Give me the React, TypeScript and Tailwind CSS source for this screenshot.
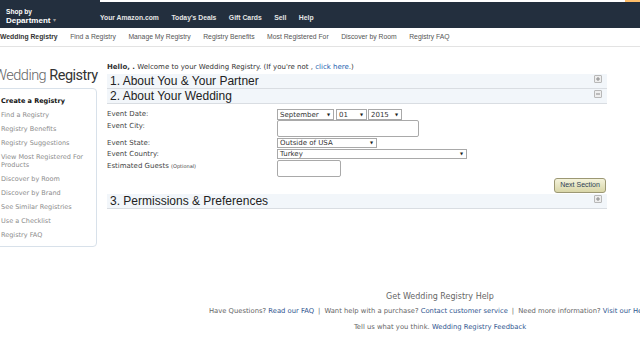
import React from "react";

const VF = "font-['Verdana','DejaVu_Sans',sans-serif]";
const AF = "font-['Arial','Liberation_Sans',sans-serif]";

function Toggle({ minus }: { minus?: boolean }) {
  return (
    <div className="w-[8px] h-[8px] border border-[#b8b8b8] bg-[#eeeeee] rounded-[1px] flex items-center justify-center">
      <svg width="6" height="6" viewBox="0 0 6 6">
        <path d={minus ? "M1 3h4" : "M1 3h4M3 1v4"} stroke="#8a8a8a" strokeWidth="1" />
      </svg>
    </div>
  );
}

function SectionHeader({ title, minus }: { title: string; minus?: boolean }) {
  return (
    <div className="h-[15px] bg-[#f2f6fa] border-b border-[#d9dde2] flex items-start justify-between pl-[3px] pr-[5px]">
      <span className={`${AF} text-[12px] leading-[14px] text-[#222]`}>{title}</span>
      <div className="mt-[1px]">
        <Toggle minus={minus} />
      </div>
    </div>
  );
}

function Select({ value, w }: { value: string; w: string }) {
  return (
    <div
      className={`${w} h-full border border-[#a9a9a9] bg-white flex items-center justify-between pl-[2px] pr-[3px] ${VF} text-[7px] leading-[8px] text-[#333]`}
    >
      <span>{value}</span>
      <span className="text-[4px] text-[#222]">▼</span>
    </div>
  );
}

const sideItems = [
  "Find a Registry",
  "Registry Benefits",
  "Registry Suggestions",
  "VIEW",
  "Discover by Room",
  "Discover by Brand",
  "See Similar Registries",
  "Use a Checklist",
  "Registry FAQ",
];

export default function App() {
  return (
    <div className="w-[640px] h-[363px] overflow-hidden bg-white relative">
      {/* Top nav */}
      <div className="h-[28px] bg-[#232f3e] flex flex-col">
        <div className="h-[2px] flex">
          <div className="w-[100px]" />
          <div className="flex-1 bg-white" />
          <div className="w-[15px] bg-[#febd69]" />
        </div>
        <div className="flex-1 flex">
          <div className={`w-[100px] pl-[6px] pt-[6px] ${AF} font-bold text-white`}>
            <div className="text-[6.6px] leading-[8px]">Shop by</div>
            <div className="text-[8px] leading-[9px] flex items-center">
              Department
              <span className="ml-[3px] text-[6px] text-[#999] font-normal">▾</span>
            </div>
          </div>
          <div className={`flex gap-[12.5px] pt-[11px] ${AF} font-bold text-[6.8px] leading-[9px] text-[#e6e6e6]`}>
            <span>Your Amazon.com</span>
            <span>Today's Deals</span>
            <span>Gift Cards</span>
            <span>Sell</span>
            <span>Help</span>
          </div>
        </div>
      </div>

      {/* Sub nav */}
      <div className={`h-[19px] border-b border-[#e3e3e3] flex items-center gap-[12.5px] ${AF} text-[6.8px] text-[#555]`}>
        <span className="font-bold text-[#333]">Wedding Registry</span>
        <span>Find a Registry</span>
        <span>Manage My Registry</span>
        <span>Registry Benefits</span>
        <span>Most Registered For</span>
        <span>Discover by Room</span>
        <span>Registry FAQ</span>
      </div>

      {/* Body */}
      <div className="flex">
        {/* Left column */}
        <div className="w-[97px] shrink-0 pt-[20px]">
          <div className="h-[18px] leading-[18px] whitespace-nowrap -ml-[6px] font-['Roboto','Liberation_Sans',sans-serif] text-[14.5px] tracking-[-0.5px]">
            <span className="font-light text-[#666]">Wedding</span>{" "}
            <span className="text-[#333]">Registry</span>
          </div>
          <div className="mt-[3px] -ml-[8px] w-[105px] border border-[#d8e1ea] rounded-[4px] pl-[8px] pt-[8px] pb-[7px] flex flex-col gap-[6px]">
            <div className={`${VF} text-[6.5px] leading-[8px] font-bold text-[#111] whitespace-nowrap`}>
              Create a Registry
            </div>
            {sideItems.map((s) =>
              s === "VIEW" ? (
                <div key={s} className={`${VF} text-[6.5px] leading-[8px] text-[#8c8c8c] whitespace-nowrap`}>
                  View Most Registered For
                  <br />
                  Products
                </div>
              ) : (
                <div key={s} className={`${VF} text-[6.5px] leading-[8px] text-[#8c8c8c] whitespace-nowrap`}>
                  {s}
                </div>
              )
            )}
          </div>
        </div>

        {/* Main column */}
        <div className="ml-[10px] w-[500px] pt-[16px]">
          <div className={`${VF} text-[7px] leading-[9px] text-[#333] whitespace-nowrap`}>
            <span className="font-bold">Hello, .</span> Welcome to your Wedding Registry. (If you're not ,{" "}
            <span className="text-[#1f5fb0]">click here.</span>)
          </div>
          <div className="mt-[2px]">
            <SectionHeader title="1. About You & Your Partner" />
            <SectionHeader title="2. About Your Wedding" minus />
          </div>

          <div className={`${VF} text-[7px] leading-[9px] text-[#444]`}>
            <div className="mt-[5px] h-[11px] flex">
              <div className="w-[170px] flex items-center">Event Date:</div>
              <div className="flex h-full">
                <Select value="September" w="w-[57px]" />
                <div className="w-[2px]" />
                <Select value="01" w="w-[31px]" />
                <div className="w-[1px]" />
                <Select value="2015" w="w-[34px]" />
              </div>
            </div>
            <div className="h-[17px] flex">
              <div className="w-[170px] pt-[2px]">Event City:</div>
              <div className="w-[142px] h-full border border-[#a9a9a9] rounded-[2px] bg-white" />
            </div>
            <div className="mt-[1px] h-[10px] flex">
              <div className="w-[170px] flex items-center">Event State:</div>
              <Select value="Outside of USA" w="w-[100px]" />
            </div>
            <div className="mt-[1px] h-[10px] flex">
              <div className="w-[170px] flex items-center">Event Country:</div>
              <Select value="Turkey" w="w-[190px]" />
            </div>
            <div className="mt-[1px] h-[17px] flex">
              <div className="w-[170px] pt-[2px]">
                Estimated Guests <span className="text-[5px]">(Optional)</span>
              </div>
              <div className="w-[64px] h-full border border-[#a9a9a9] rounded-[2px] bg-white" />
            </div>
          </div>

          <div className="mt-[1px] flex justify-end pr-[1px]">
            <div
              className={`w-[52px] h-[15px] border border-[#9c9874] rounded-[3px] bg-gradient-to-b from-[#f4f3dc] to-[#d9d6a8] flex items-center justify-center ${AF} text-[7px] text-[#2e3f55]`}
            >
              Next Section
            </div>
          </div>

          <div className="mt-[1px]">
            <SectionHeader title="3. Permissions & Preferences" />
          </div>
        </div>
      </div>

      {/* Footer */}
      <div className={`mt-[45px] w-[880px] text-center ${VF} whitespace-nowrap`}>
        <div className="text-[8px] leading-[10px] text-[#666]">Get Wedding Registry Help</div>
        <div className="mt-[5px] text-[6.8px] leading-[9px] text-[#666]">
          Have Questions? <span className="text-[#30568f]">Read our FAQ</span>
          <span className="mx-[4px]">|</span>
          Want help with a purchase? <span className="text-[#30568f]">Contact customer service</span>
          <span className="mx-[4px]">|</span>
          Need more information? <span className="text-[#30568f]">Visit our Help pages</span>
        </div>
        <div className="mt-[7px] text-[6.8px] leading-[9px] text-[#666]">
          Tell us what you think. <span className="text-[#30568f]">Wedding Registry Feedback</span>
        </div>
      </div>
    </div>
  );
}
